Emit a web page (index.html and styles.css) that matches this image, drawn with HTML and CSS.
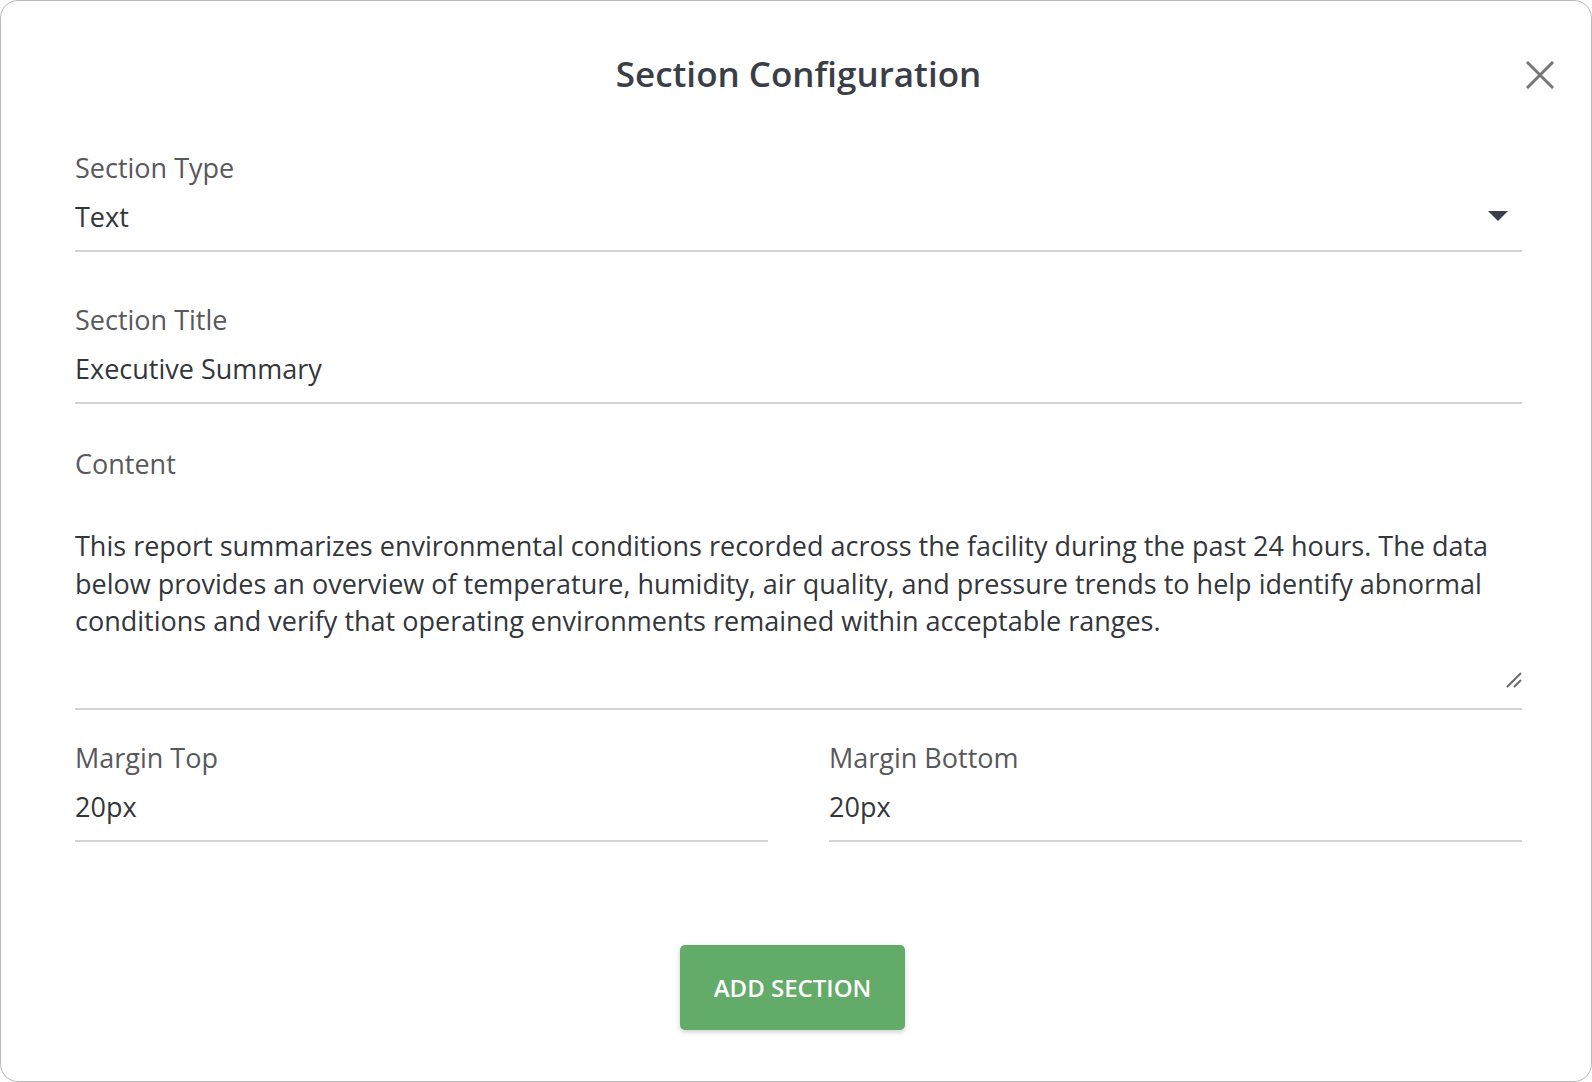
FILE: index.html
```html
<!DOCTYPE html>
<html lang="en">
<head>
    <meta charset="UTF-8">
    <meta name="viewport" content="width=device-width, initial-scale=1.0">
    <title>Section Configuration</title>
    <link rel="stylesheet" href="styles.css">
</head>
<body>
    <div class="modal">
        <div class="modalHeader">
            <h2 class="modalTitle">Section Configuration</h2>
            <button class="closeBtn" type="button" aria-label="Close">
                <svg width="28" height="28" viewBox="0 0 28 28">
                    <path d="M2 2L26 26M26 2L2 26" stroke="#777" stroke-width="3" stroke-linecap="square" fill="none"/>
                </svg>
            </button>
        </div>

        <form class="sectionForm">
            <div class="field">
                <label class="fieldLabel" for="sectionType">Section Type</label>
                <div class="fieldControl selectWrap">
                    <select id="sectionType" class="fieldInput">
                        <option value="text" selected>Text</option>
                        <option value="table">Table</option>
                        <option value="chart">Chart</option>
                    </select>
                    <svg class="selectArrow" width="20" height="10" viewBox="0 0 20 10">
                        <path d="M0 0H20L10 10Z" fill="#3b4048"/>
                    </svg>
                </div>
            </div>

            <div class="field">
                <label class="fieldLabel" for="sectionTitle">Section Title</label>
                <div class="fieldControl">
                    <input id="sectionTitle" class="fieldInput" type="text" value="Executive Summary">
                </div>
            </div>

            <div class="field contentField">
                <label class="fieldLabel" for="sectionContent">Content</label>
                <div class="fieldControl textareaWrap">
                    <textarea id="sectionContent" class="fieldInput">This report summarizes environmental conditions recorded across the facility during the past 24 hours. The data below provides an overview of temperature, humidity, air quality, and pressure trends to help identify abnormal conditions and verify that operating environments remained within acceptable ranges.</textarea>
                    <!-- resize handle -->
                    <svg class="resizeGrip" width="16" height="16" viewBox="0 0 16 16">
                        <path d="M1 15L15 1M8 15L15 8" stroke="#6b6b6b" stroke-width="2" fill="none"/>
                    </svg>
                </div>
            </div>

            <div class="fieldRow">
                <div class="field">
                    <label class="fieldLabel" for="marginTop">Margin Top</label>
                    <div class="fieldControl">
                        <input id="marginTop" class="fieldInput" type="text" value="20px">
                    </div>
                </div>
                <div class="field">
                    <label class="fieldLabel" for="marginBottom">Margin Bottom</label>
                    <div class="fieldControl">
                        <input id="marginBottom" class="fieldInput" type="text" value="20px">
                    </div>
                </div>
            </div>

            <div class="formActions">
                <button class="addBtn" type="button">ADD SECTION</button>
            </div>
        </form>
    </div>
</body>
</html>
```

FILE: styles.css
```css
* {
    box-sizing: border-box;
}
body {
    margin: 0;
    font-family: "Open Sans", "Noto Sans", sans-serif;
    background: #fff;
}
.modal {
    height: 100vh;
    border: 1px solid #b9b9b9;
    border-radius: 18px;
    padding: 49px 69px 0 74px;
    background: #fff;
}
.modalHeader {
    display: grid;
    grid-template-columns: 1fr auto 1fr;
    align-items: start;
}
.modalTitle {
    grid-column: 2;
    margin: 0;
    font-size: 35px;
    line-height: 48px;
    font-weight: 600;
    color: #3a3e46;
}
.closeBtn {
    grid-column: 3;
    justify-self: end;
    width: 28px;
    height: 28px;
    margin: 11px -32px 0 0;
    padding: 0;
    border: none;
    background: none;
    cursor: pointer;
}
.closeBtn svg {
    display: block;
}
.sectionForm {
    display: flex;
    flex-direction: column;
    margin-top: 52px;
}
.field + .field {
    margin-top: 50px;
}
.fieldLabel {
    display: block;
    font-size: 27px;
    line-height: 36px;
    color: #58595c;
}
.fieldControl {
    margin-top: 12px;
    padding-bottom: 16px;
    border-bottom: 2px solid #d4d4d4;
}
.fieldInput {
    display: block;
    width: 100%;
    height: 36px;
    margin: 0;
    padding: 0;
    border: none;
    outline: none;
    background: transparent;
    font-family: inherit;
    font-size: 27px;
    color: #33363b;
}
.selectWrap {
    display: flex;
    align-items: center;
}
.selectWrap select {
    flex: 1;
    appearance: none;
    -webkit-appearance: none;
}
.selectArrow {
    margin-right: 14px;
}
.field.contentField {
    margin-top: 42px;
}
.textareaWrap {
    position: relative;
    margin-top: 14px;
    padding-bottom: 19px;
}
.textareaWrap textarea {
    height: 193px;
    padding-top: 31px;
    line-height: 37.6px;
    resize: none;
}
.resizeGrip {
    position: absolute;
    right: 0;
    bottom: 20px;
}
.fieldRow {
    display: grid;
    grid-template-columns: 1fr 1fr;
    column-gap: 61px;
    margin-top: 30px;
}
.fieldRow .field + .field {
    margin-top: 0;
}
.formActions {
    display: flex;
    justify-content: center;
    margin-top: 103px;
}
.addBtn {
    width: 225px;
    height: 85px;
    margin-right: 12px;
    border: none;
    border-radius: 5px;
    background: #63ab68;
    color: #fff;
    font-family: inherit;
    font-size: 24px;
    font-weight: 600;
    box-shadow: 0 2px 5px rgba(0, 0, 0, 0.2);
    cursor: pointer;
}
```
